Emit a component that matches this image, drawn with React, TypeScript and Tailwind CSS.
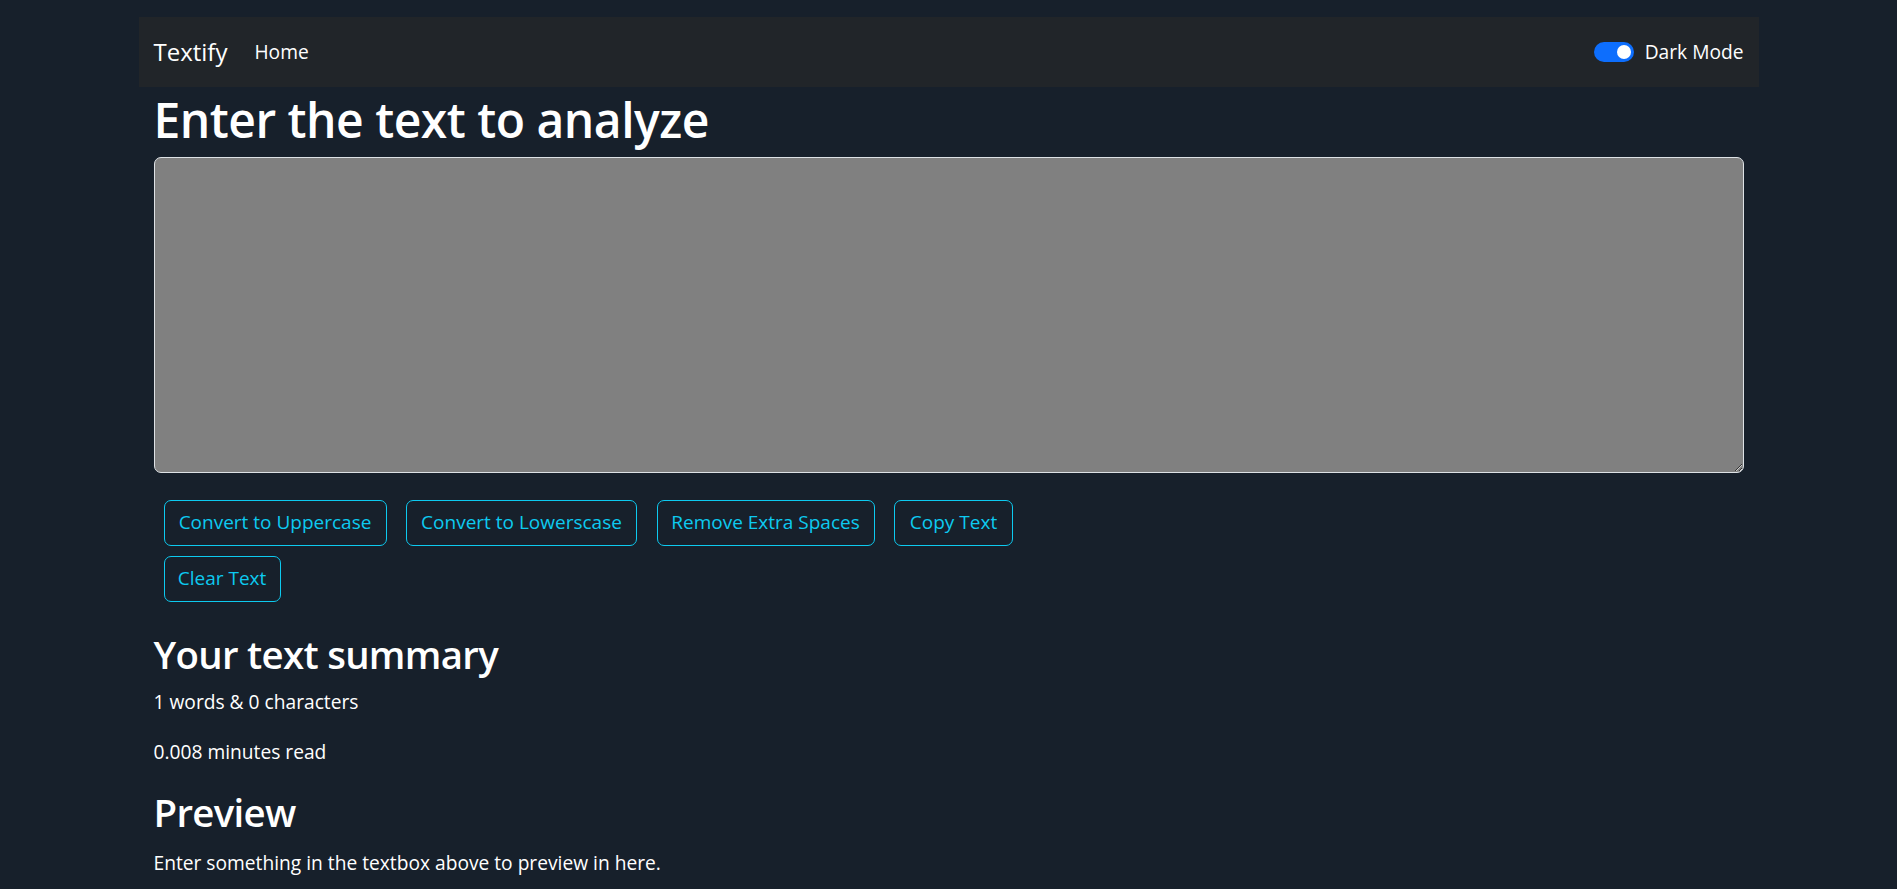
import { useState } from "react"

const font = { fontFamily: '"Segoe UI", "Open Sans", "Noto Sans", sans-serif' }

const buttons = [
  { label: "Convert to Uppercase", w: "w-[223px]" },
  { label: "Convert to Lowerscase", w: "w-[231px]" },
  { label: "Remove Extra Spaces", w: "w-[218px]" },
  { label: "Copy Text", w: "w-[119px]" },
]

function OutlineButton({ label, w }: { label: string; w: string }) {
  return (
    <button
      type="button"
      className={`${w} h-[46px] shrink-0 rounded-[7px] border border-[#0dcaf0] text-[19px] leading-[28.8px] text-[#0dcaf0] whitespace-nowrap`}
    >
      {label}
    </button>
  )
}

export default function App() {
  const [text, setText] = useState("")
  const [dark, setDark] = useState(true)

  const words = text.split(" ").length
  const minutes = 0.008 * words

  return (
    <div className="h-screen overflow-hidden bg-[#17202b] text-white" style={font}>
      <nav className="mx-auto mt-[17px] flex h-[70px] w-[1620px] items-center bg-[#212529] px-[15px]">
        <span className="text-[24px] leading-[36px]">Textify</span>
        <a className="ml-[27px] text-[19.2px] leading-[28.8px]">Home</a>
        <label className="ml-auto flex items-center gap-[11px] text-[19.2px] leading-[28.8px]">
          <button
            type="button"
            onClick={() => setDark(!dark)}
            className={`flex h-[20px] w-[40px] items-center rounded-full px-[3px] ${
              dark ? "justify-end bg-[#0d6efd]" : "justify-start border border-gray-400 bg-white"
            }`}
          >
            <span className={`h-[14px] w-[14px] rounded-full ${dark ? "bg-white" : "bg-gray-400"}`} />
          </button>
          Dark Mode
        </label>
      </nav>

      <div className="mx-auto w-[1620px] px-[15px]">
        <h1 className="mt-[4px] mb-[8px] text-[48px] font-semibold leading-[57.6px] tracking-[-0.5px]">
          Enter the text to analyze
        </h1>
        <textarea
          value={text}
          onChange={(e) => setText(e.target.value)}
          className="block h-[316px] w-full rounded-[7px] border border-[#dee2e6] bg-[#808080] px-[14px] py-[7px] text-[19.2px] text-white outline-none"
        />

        <div className="mt-[27px] flex gap-[19.5px] pl-[10px]">
          {buttons.map((b) => (
            <OutlineButton key={b.label} label={b.label} w={b.w} />
          ))}
        </div>
        <div className="mt-[10px] flex pl-[10px]">
          <OutlineButton label="Clear Text" w="w-[117px]" />
        </div>

        <div className="mt-[29px]">
          <h2 className="mb-[11px] text-[38.4px] font-semibold leading-[46px] tracking-[-0.7px]">Your text summary</h2>
          <p className="mb-[22px] text-[19.2px] leading-[28.8px]">
            {words} words &amp; {text.length} characters
          </p>
          <p className="mb-[22px] text-[19.2px] leading-[28.8px]">{minutes} minutes read</p>
          <h2 className="mb-[14px] text-[38.4px] font-semibold leading-[46px] tracking-[-0.7px]">Preview</h2>
          <p className="text-[19.2px] leading-[28.8px]">
            {text.length > 0 ? text : "Enter something in the textbox above to preview in here."}
          </p>
        </div>
      </div>
    </div>
  )
}
